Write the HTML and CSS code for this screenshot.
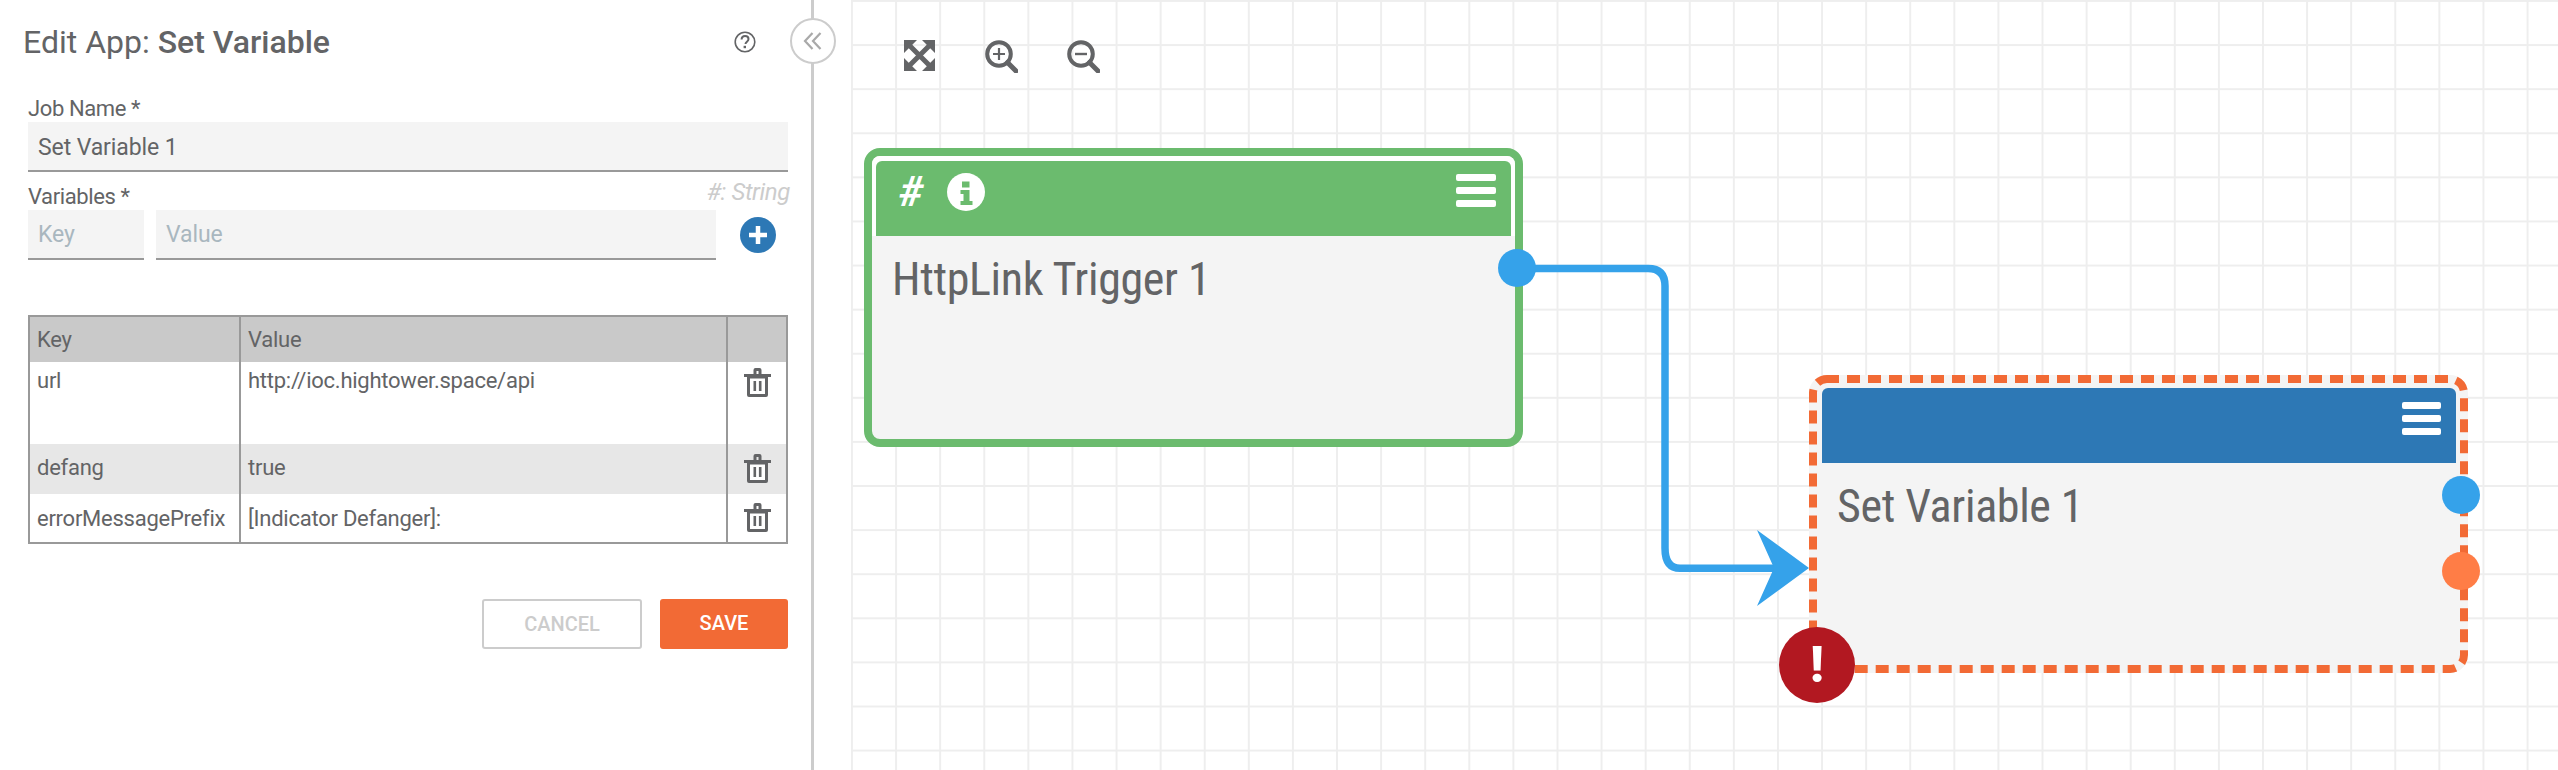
FILE: index.html
```html
<!DOCTYPE html>
<html lang="en">
<head>
  <meta charset="UTF-8" />
  <title>Edit App: Set Variable</title>
  <link rel="stylesheet" href="styles.css">
</head>
<body>

  <aside class="panel">
    <div class="panel-head">
      <h1>Edit App: <strong>Set Variable</strong></h1>
      <svg class="help" viewBox="0 0 22 22">
        <circle cx="11" cy="11" r="9.8" fill="none" stroke="#636466" stroke-width="1.6"/>
        <path d="M7.6 8.6c0-2.2 1.5-3.5 3.5-3.5s3.4 1.2 3.4 3c0 2.600-3 2.600-3 5" fill="none" stroke="#636466" stroke-width="2"/>
        <rect x="9.600" y="14.800" width="2.400" height="2.400" fill="#636466"/>
      </svg>
    </div>

    <label class="field-label">Job Name *</label>
    <div class="input">Set Variable 1</div>

    <div class="label-row">
      <label class="field-label">Variables *</label>
      <span class="type-hint">#: String</span>
    </div>
    <div class="var-row">
      <div class="input input-key placeholder">Key</div>
      <div class="input input-value placeholder">Value</div>
      <svg class="add-btn" viewBox="0 0 36 36">
        <circle cx="18" cy="18" r="18" fill="#2d78b5"/>
        <path d="M18 9v18M9 18h18" stroke="#fff" stroke-width="4.500"/>
      </svg>
    </div>

    <table class="vars">
      <thead>
        <tr><th class="col-key">Key</th><th>Value</th><th class="col-del"></th></tr>
      </thead>
      <tbody>
        <tr class="tall">
          <td>url</td>
          <td>http://ioc.hightower.space/api</td>
          <td><svg class="trash" viewBox="0 0 27 30"><use href="#trash"/></svg></td>
        </tr>
        <tr class="alt">
          <td>defang</td>
          <td>true</td>
          <td><svg class="trash" viewBox="0 0 27 30"><use href="#trash"/></svg></td>
        </tr>
        <tr>
          <td>errorMessagePrefix</td>
          <td>[Indicator Defanger]:</td>
          <td><svg class="trash" viewBox="0 0 27 30"><use href="#trash"/></svg></td>
        </tr>
      </tbody>
    </table>

    <div class="actions">
      <button class="btn-cancel">CANCEL</button>
      <button class="btn-save">SAVE</button>
    </div>

    <button class="collapse">
      <svg viewBox="0 0 20 20"><path d="M9.500 2 2 10l7.500 8M17.500 2 10 10l7.500 8" fill="none" stroke="#a9a9a9" stroke-width="2.200"/></svg>
    </button>
  </aside>

  <main class="canvas">
    <div class="tools">
      <svg class="tool tool-fit" viewBox="0 0 31 31">
        <path d="M0 0h13L0 13zM31 0v13L18 0zM0 31V18l13 13zM31 31H18l13-13z" fill="#636466"/>
        <path d="M4 4l23 23M27 4 4 27" stroke="#636466" stroke-width="5"/>
      </svg>
      <svg class="tool" viewBox="0 0 33 33">
        <circle cx="14" cy="14" r="11.800" fill="none" stroke="#636466" stroke-width="4"/>
        <path d="M22.500 22.500 31 31" stroke="#636466" stroke-width="5" stroke-linecap="round"/>
        <path d="M14 8v12M8 14h12" stroke="#636466" stroke-width="2.200"/>
      </svg>
      <svg class="tool" viewBox="0 0 33 33">
        <circle cx="14" cy="14" r="11.800" fill="none" stroke="#636466" stroke-width="4"/>
        <path d="M22.500 22.500 31 31" stroke="#636466" stroke-width="5" stroke-linecap="round"/>
        <path d="M8 14h12" stroke="#636466" stroke-width="2.400"/>
      </svg>
    </div>

    <svg class="wires" viewBox="0 0 1707 770">
      <path d="M666 268.500H797Q814 268.500 814 286V548Q814 568.300 829 568.300H925" fill="none" stroke="#35a2ea" stroke-width="7.500"/>
      <path d="M958 568 906 530 923 568 906 606z" fill="#35a2ea"/>
    </svg>

    <section class="node node-trigger">
      <div class="node-top">
        <div class="node-head">
          <span class="hash">#</span>
          <svg class="info" viewBox="0 0 38 38">
            <circle cx="19" cy="19" r="19" fill="#fff"/>
            <path d="M15 8.500h7.500v6H15zM13.500 17h9v11h3v4h-12v-4h3v-7h-3z" fill="#6bbb6e"/>
          </svg>
          <div class="menu"><i></i><i></i><i></i></div>
        </div>
      </div>
      <div class="node-title">HttpLink Trigger 1</div>
      <span class="port port-out"></span>
    </section>

    <section class="node-err">
      <svg class="dash" viewBox="0 0 659 298">
        <rect x="4" y="4" width="651" height="290" rx="14" fill="#f4f4f4" stroke="#f4f4f4" stroke-width="8"/>
        <rect x="4" y="4" width="651" height="290" rx="14" fill="none" stroke="#f26a35" stroke-width="8" stroke-dasharray="13 8" stroke-dashoffset="1"/>
      </svg>
      <div class="node-head node-head-blue">
        <div class="menu"><i></i><i></i><i></i></div>
      </div>
      <div class="node-title">Set Variable 1</div>
      <span class="port port-ok"></span>
      <span class="port port-fail"></span>
      <span class="err-badge">!</span>
    </section>
  </main>

  <svg class="defs" width="0" height="0">
    <symbol id="trash" viewBox="0 0 27 30">
      <path d="M3 8h21v19q0 2-2 2H5q-2 0-2-2zM0 6h27v3H0zM9.500 6V2q0-2 2-2h4q2 0 2 2v4h-3V3h-2v3z" fill="#636466"/>
      <path d="M6 10.500h15v15.500H6z" fill="#fff"/>
      <path d="M9.500 13h2.600v10H9.500zM14.900 13h2.600v10h-2.600z" fill="#636466"/>
    </symbol>
  </svg>

</body>
</html>
```

FILE: styles.css
```css
* { box-sizing: border-box; }
html, body { height: 100%; }
body {
  margin: 0;
  display: flex;
  font-family: Roboto, sans-serif;
  color: #636466;
  background: #fff;
  overflow: hidden;
}

/* left panel */
.panel {
  position: relative;
  width: 814px;
  flex: none;
  padding: 0 23px 0 28px;
  border-right: 3px solid #ccc;
}
.panel-head {
  display: flex;
  justify-content: space-between;
  align-items: center;
  height: 84px;
  margin-left: -5px;
  padding-right: 32px;
}
.panel-head h1 {
  margin: 0;
  font-size: 32px;
  font-weight: 400;
}
.panel-head strong { font-weight: 500; }
.help { width: 22px; height: 22px; }
.field-label {
  display: block;
  height: 38px;
  padding-top: 11px;
  font-size: 22px;
  letter-spacing: -0.4px;
  line-height: 28px;
}
.input {
  height: 50px;
  padding: 0 10px;
  background: #f4f4f4;
  border-bottom: 2px solid #999;
  font-size: 23px;
  letter-spacing: -0.1px;
  line-height: 52px;
}
.placeholder { color: #a9b7bf; line-height: 50px; }
.label-row {
  display: flex;
  justify-content: space-between;
  align-items: flex-end;
}
.type-hint {
  height: 38px;
  margin-right: -2px;
  padding-top: 6px;
  font-size: 24px;
  font-style: italic;
  letter-spacing: -0.4px;
  line-height: 28px;
  color: #ccc;
}
.var-row {
  display: flex;
  gap: 12px;
}
.input-key { width: 116px; }
.input-value { width: 560px; }
.add-btn {
  width: 36px;
  height: 36px;
  margin: 7px 0 0 12px;
}
.vars {
  width: 100%;
  margin-top: 55px;
  border-collapse: collapse;
  border: 2px solid #999;
  table-layout: fixed;
  font-size: 22px;
  letter-spacing: -0.25px;
}
.vars th, .vars td {
  padding: 0 7px;
  border-left: 2px solid #999;
  font-weight: 400;
  text-align: left;
}
.vars th { height: 46px; background: #c9c9c9; }
.vars td { height: 49px; vertical-align: middle; }
.vars .tall td { height: 82px; vertical-align: top; padding-top: 6px; }
.vars .alt td { height: 50px; padding-bottom: 4px; background: #e7e7e7; }
.col-key { width: 211px; }
.col-del { width: 60px; }
.vars td:last-child { padding: 0; text-align: center; }
.vars .tall td:last-child { padding-top: 6px; }
.trash { width: 27px; height: 30px; vertical-align: middle; }
.actions {
  display: flex;
  justify-content: flex-end;
  gap: 18px;
  margin-top: 55px;
}
.actions button {
  height: 50px;
  border-radius: 3px;
  font-family: Roboto, sans-serif;
  font-size: 20px;
  font-weight: 500;
}
.btn-cancel {
  width: 160px;
  background: #fff;
  border: 2px solid #ccc;
  color: #ccc;
}
.btn-save {
  width: 128px;
  padding-bottom: 3px;
  background: #f26a35;
  border: none;
  color: #fff;
}
.collapse {
  position: absolute;
  top: 18px;
  right: -25px;
  width: 46px;
  height: 46px;
  padding: 0;
  display: flex;
  align-items: center;
  justify-content: center;
  background: #fff;
  border: 2px solid #ccc;
  border-radius: 50%;
}
.collapse svg { width: 20px; height: 20px; }

/* canvas */
.canvas {
  position: relative;
  flex: 1;
  margin-left: 37px;
  background-color: #fff;
  background-image:
    linear-gradient(#eee 2px, transparent 2px),
    linear-gradient(90deg, #eee 2px, transparent 2px);
  background-size: 44.1px 44.1px;
}
.tools {
  position: absolute;
  top: 40px;
  left: 53px;
  display: flex;
  gap: 49.5px;
}
.tool { width: 33px; height: 33px; }
.tool-fit { width: 31px; height: 31px; }
.wires {
  position: absolute;
  top: 0;
  left: 0;
  width: 1707px;
  height: 770px;
}

/* nodes */
.node {
  position: absolute;
  left: 13px;
  top: 148px;
  width: 659px;
  height: 299px;
  background: #f4f4f4;
  border: 8px solid #6bbb6e;
  border-radius: 16px;
}
.node-top {
  padding: 5px 4px 0;
  background: #fff;
  border-radius: 8px 8px 0 0;
}
.node-head {
  display: flex;
  align-items: flex-start;
  height: 75px;
  padding: 13px 15px 0 23px;
  background: #6bbb6e;
  border-radius: 6px 6px 0 0;
}
.hash {
  font-size: 42px;
  font-style: italic;
  font-weight: 700;
  line-height: 36px;
  color: #fff;
}
.info {
  width: 38px;
  height: 38px;
  margin: -1px 0 0 24px;
}
.menu {
  display: flex;
  flex-direction: column;
  gap: 6px;
  margin-left: auto;
}
.menu i {
  display: block;
  width: 40px;
  height: 7px;
  background: #fff;
  border-radius: 2px;
}
.node-title {
  padding: 13px 0 0 20px;
  font-family: "Roboto Condensed", Roboto, sans-serif;
  font-size: 46px;
  font-stretch: 75%;
  letter-spacing: -0.35px;
  line-height: 60px;
  white-space: nowrap;
}
.port {
  position: absolute;
  width: 38px;
  height: 38px;
  border-radius: 50%;
}
.port-out { top: 93px; right: -21px; background: #35a2ea; }
.node-err {
  position: absolute;
  left: 958px;
  top: 375px;
  width: 659px;
  height: 298px;
  padding: 13px 12px 0 13px;
}
.dash {
  position: absolute;
  top: 0;
  left: 0;
  width: 659px;
  height: 298px;
}
.node-err .node-head, .node-err .node-title { position: relative; }
.node-head-blue {
  padding: 14px 15px 0 0;
  background: #2d78b5;
}
.node-err .node-title { padding-left: 15px; padding-top: 13px; }
.node-err .menu i { width: 39px; }
.port-ok { top: 101px; right: -12px; background: #35a2ea; }
.port-fail { top: 177px; right: -12px; background: #ff7d46; }
.err-badge {
  position: absolute;
  left: -30px;
  top: 252px;
  width: 76px;
  height: 76px;
  border-radius: 50%;
  background: #b21821;
  color: #fff;
  font-size: 50px;
  font-weight: 900;
  line-height: 76px;
  text-align: center;
}
.defs { position: absolute; }
```
